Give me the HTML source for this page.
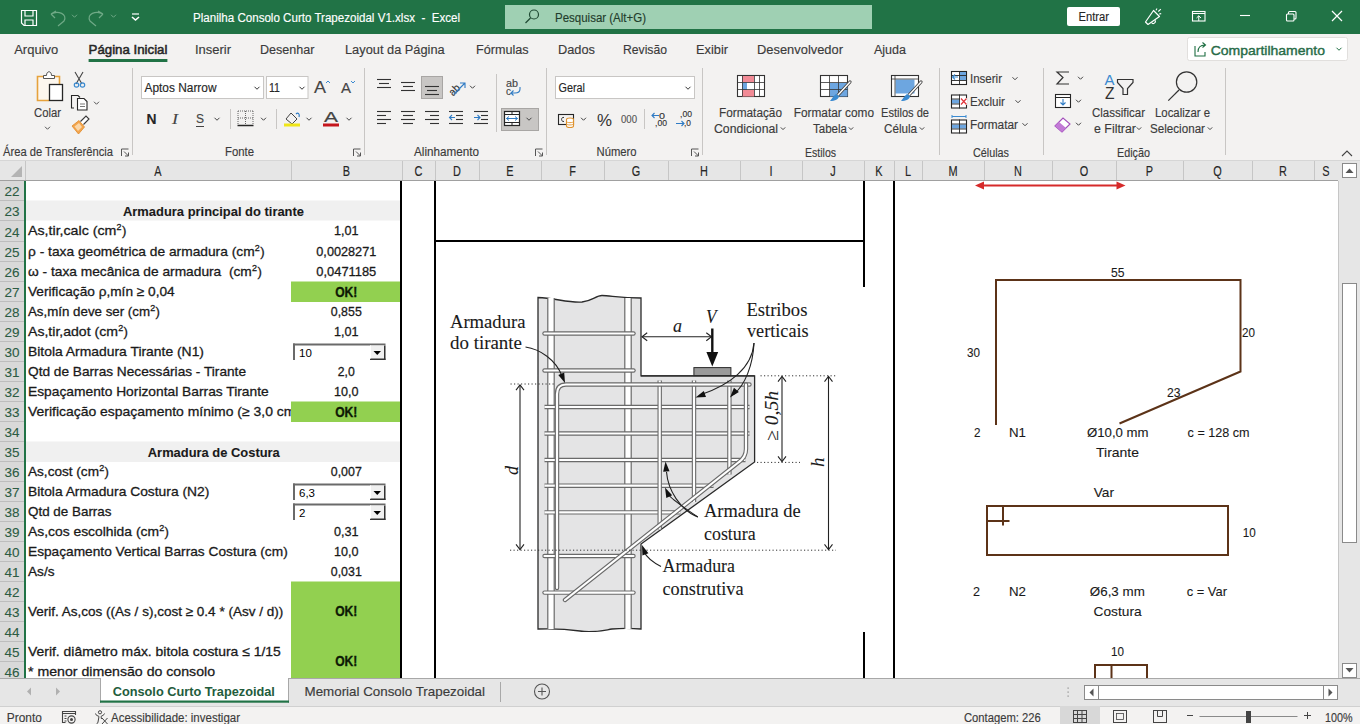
<!DOCTYPE html>
<html><head><meta charset="utf-8"><title>Excel</title>
<style>
html,body{margin:0;padding:0;background:#fff;overflow:hidden;}
svg{display:block;font-family:"Liberation Sans", sans-serif;}
text{stroke:currentColor;}
</style></head><body>
<svg width="1360" height="724" viewBox="0 0 1360 724">
<rect x="0" y="0" width="1360" height="34" fill="#217346"/>
<path d="M21.5,10.5 H36.5 V25.5 H24 L21.5,23 Z" fill="none" stroke="#fff" stroke-width="1.2"/>
<path d="M25,10.5 V16 H33 V10.5" fill="none" stroke="#fff" stroke-width="1.2"/>
<path d="M25,25.5 V20 H33 V25.5" fill="none" stroke="#fff" stroke-width="1.2"/>
<path d="M51,14 L55,18 M51,14 L56,11 M51,14 C58,10 68,14 64,21 L58,26" fill="none" stroke="#6fa986" stroke-width="1.2"/>
<path d="M72.0,14.75 L74.5,17.25 L77.0,14.75" fill="none" stroke="#6fa986" stroke-width="1"/>
<path d="M103,14 L99,18 M103,14 L98,11 M103,14 C96,10 86,14 90,21 L96,26" fill="none" stroke="#6fa986" stroke-width="1.2"/>
<path d="M111.0,14.75 L113.5,17.25 L116.0,14.75" fill="none" stroke="#6fa986" stroke-width="1"/>
<line x1="132" y1="14" x2="139" y2="14" stroke="#fff" stroke-width="1.2"/>
<path d="M132,17 L135.5,20 L139,17" fill="none" stroke="#fff" stroke-width="1.6"/>
<text x="193" y="22" font-size="12.5" fill="#fff" color="#fff" stroke-width="0.15" textLength="267" lengthAdjust="spacingAndGlyphs">Planilha Consolo Curto Trapezoidal V1.xlsx  -  Excel</text>
<rect x="505" y="5" width="367" height="24" fill="#9fd0b3"/>
<circle cx="534" cy="14.5" r="4.5" fill="none" stroke="#1f4a33" stroke-width="1.2"/>
<line x1="530.5" y1="18" x2="525.5" y2="23" stroke="#1f4a33" stroke-width="1.2"/>
<text x="555" y="21.5" font-size="12.5" fill="#1f3d2c" color="#1f3d2c" stroke-width="0.15" textLength="91" lengthAdjust="spacingAndGlyphs">Pesquisar (Alt+G)</text>
<rect x="1067" y="7" width="53" height="19" fill="#fff" rx="2"/>
<text x="1078.5" y="21" font-size="12.5" fill="#262626" color="#262626" stroke-width="0.15" textLength="30.5" lengthAdjust="spacingAndGlyphs">Entrar</text>
<path d="M1145.5,22 L1148,24.5 L1159.5,16.5 L1153.5,10.5 Z" fill="none" stroke="#fff" stroke-width="1.2" stroke-linejoin="round"/>
<path d="M1151.5,22.5 a2,2 0 0 0 3.5,-2.2" fill="none" stroke="#fff" stroke-width="1.1"/>
<path d="M1156,10.2 L1157,8.5 M1158.3,11.5 L1160.8,9.2 M1159.2,14 L1161.2,13.6" fill="none" stroke="#fff" stroke-width="1.1"/>
<rect x="1192.5" y="11.5" width="12.5" height="9.5" fill="none" stroke="#fff" stroke-width="1.1"/>
<line x1="1192.5" y1="13.5" x2="1205" y2="13.5" stroke="#fff" stroke-width="1"/>
<path d="M1198.75,21 V15.8 M1196.5,18 L1198.75,15.8 L1201,18" fill="none" stroke="#fff" stroke-width="1"/>
<line x1="1240" y1="15.5" x2="1250" y2="15.5" stroke="#fff" stroke-width="1.1"/>
<rect x="1286.5" y="14" width="7.5" height="7" fill="none" stroke="#fff" stroke-width="1.1" rx="1"/>
<path d="M1288.5,14 V12.5 a1,1 0 0 1 1,-1 H1295 a1,1 0 0 1 1,1 V18 a1,1 0 0 1 -1,1 H1294" fill="none" stroke="#fff" stroke-width="1.1"/>
<path d="M1332,11 L1342,21 M1342,11 L1332,21" fill="none" stroke="#fff" stroke-width="1.2"/>
<rect x="0" y="34" width="1360" height="126" fill="#f3f2f1"/>
<text x="14.2" y="54" font-size="12.5" fill="#3b3b3b" color="#3b3b3b" stroke-width="0.15" textLength="44" lengthAdjust="spacingAndGlyphs">Arquivo</text>
<text x="195" y="54" font-size="12.5" fill="#3b3b3b" color="#3b3b3b" stroke-width="0.15" textLength="36" lengthAdjust="spacingAndGlyphs">Inserir</text>
<text x="260" y="54" font-size="12.5" fill="#3b3b3b" color="#3b3b3b" stroke-width="0.15" textLength="54.5" lengthAdjust="spacingAndGlyphs">Desenhar</text>
<text x="345" y="54" font-size="12.5" fill="#3b3b3b" color="#3b3b3b" stroke-width="0.15" textLength="99.7" lengthAdjust="spacingAndGlyphs">Layout da Página</text>
<text x="476" y="54" font-size="12.5" fill="#3b3b3b" color="#3b3b3b" stroke-width="0.15" textLength="52.6" lengthAdjust="spacingAndGlyphs">Fórmulas</text>
<text x="558" y="54" font-size="12.5" fill="#3b3b3b" color="#3b3b3b" stroke-width="0.15" textLength="37" lengthAdjust="spacingAndGlyphs">Dados</text>
<text x="623" y="54" font-size="12.5" fill="#3b3b3b" color="#3b3b3b" stroke-width="0.15" textLength="44" lengthAdjust="spacingAndGlyphs">Revisão</text>
<text x="696" y="54" font-size="12.5" fill="#3b3b3b" color="#3b3b3b" stroke-width="0.15" textLength="32" lengthAdjust="spacingAndGlyphs">Exibir</text>
<text x="757" y="54" font-size="12.5" fill="#3b3b3b" color="#3b3b3b" stroke-width="0.15" textLength="86" lengthAdjust="spacingAndGlyphs">Desenvolvedor</text>
<text x="874" y="54" font-size="12.5" fill="#3b3b3b" color="#3b3b3b" stroke-width="0.15" textLength="32" lengthAdjust="spacingAndGlyphs">Ajuda</text>
<text x="88.6" y="54" font-size="12.5" fill="#262626" color="#262626" stroke-width="0.5" textLength="78.8" lengthAdjust="spacingAndGlyphs">Página Inicial</text>
<rect x="88.6" y="59" width="78.8" height="3" fill="#217346"/>
<rect x="1187.5" y="37.5" width="160" height="23" fill="#fff" stroke="#e1dfdd" stroke-width="1" rx="2"/>
<path d="M1195,46 V56 H1205 V52" fill="none" stroke="#1e6e42" stroke-width="1.1"/>
<path d="M1198,52 C1198,47 1201,45 1205,45 M1202.5,42.5 L1205.5,45 L1202.5,47.5" fill="none" stroke="#1e6e42" stroke-width="1.1"/>
<text x="1210.7" y="54.5" font-size="13.5" fill="#276b47" color="#276b47" stroke-width="0.4" textLength="114.3" lengthAdjust="spacingAndGlyphs">Compartilhamento</text>
<path d="M1336.5,47.75 L1339,50.25 L1341.5,47.75" fill="none" stroke="#1e6e42" stroke-width="1"/>
<line x1="132.5" y1="68" x2="132.5" y2="155" stroke="#c8c6c4" stroke-width="1"/>
<line x1="364.5" y1="68" x2="364.5" y2="155" stroke="#c8c6c4" stroke-width="1"/>
<line x1="546.5" y1="68" x2="546.5" y2="155" stroke="#c8c6c4" stroke-width="1"/>
<line x1="702.5" y1="68" x2="702.5" y2="155" stroke="#c8c6c4" stroke-width="1"/>
<line x1="939.5" y1="68" x2="939.5" y2="155" stroke="#c8c6c4" stroke-width="1"/>
<line x1="1043.5" y1="68" x2="1043.5" y2="155" stroke="#c8c6c4" stroke-width="1"/>
<line x1="1225.5" y1="68" x2="1225.5" y2="155" stroke="#c8c6c4" stroke-width="1"/>
<rect x="37.5" y="76.5" width="22" height="24" fill="#fdf7ee"/>
<path d="M45,76.5 H37.5 V100.5 H49" fill="none" stroke="#e6a23c" stroke-width="1.6"/>
<path d="M53,76.5 H59.5 V84" fill="none" stroke="#e6a23c" stroke-width="1.6"/>
<path d="M43.5,78.5 V75.5 H46.5 C46.5,70.5 51.5,70.5 51.5,75.5 H54.5 V78.5 Z" fill="#fff" stroke="#555" stroke-width="1"/>
<rect x="49.5" y="84.5" width="13" height="16" fill="#fff" stroke="#262626" stroke-width="1.3"/>
<text x="34" y="117" font-size="12.5" fill="#3b3b3b" color="#3b3b3b" stroke-width="0.15" textLength="27" lengthAdjust="spacingAndGlyphs">Colar</text>
<path d="M45.0,126.75 L47.5,129.25 L50.0,126.75" fill="none" stroke="#555" stroke-width="1"/>
<path d="M75,72 L82,84 M83,72 L76,84" fill="none" stroke="#444" stroke-width="1.1"/>
<circle cx="76.5" cy="85" r="2.2" fill="none" stroke="#3a8ad0" stroke-width="1.2"/>
<circle cx="82.5" cy="85" r="2.2" fill="none" stroke="#3a8ad0" stroke-width="1.2"/>
<path d="M74,108 H71.5 V95.5 H78 L80,97.5" fill="none" stroke="#262626" stroke-width="1.1"/>
<path d="M77.5,98.5 H84 L87,101.5 V110 H77.5 Z" fill="#fff" stroke="#262626" stroke-width="1.1"/>
<line x1="80" y1="104" x2="85" y2="104" stroke="#555" stroke-width="0.8"/>
<line x1="80" y1="106.5" x2="85" y2="106.5" stroke="#555" stroke-width="0.8"/>
<path d="M94.0,101.75 L96.5,104.25 L99.0,101.75" fill="none" stroke="#555" stroke-width="1"/>
<path d="M72,126 L79,120.5 L84.5,127 L78.5,134 Z" fill="#f3a54d" stroke="#e08a2a" stroke-width="0.8"/>
<path d="M74.5,126.5 L79,123 L82,127 L78,131 Z" fill="#fbd7a8"/>
<path d="M80.5,121.5 L86,116 L89,119 L83.5,124.5" fill="#fff" stroke="#3a3a3a" stroke-width="1.1"/>
<text x="3" y="156" font-size="12.5" fill="#3b3b3b" color="#3b3b3b" stroke-width="0.15" textLength="110" lengthAdjust="spacingAndGlyphs">Área de Transferência</text>
<path d="M121.5,156 V149 H128.5" fill="none" stroke="#555" stroke-width="1"/>
<path d="M124.0,151.5 L128.5,156 M128.5,152.5 V156 H125.0" fill="none" stroke="#555" stroke-width="1"/>
<rect x="141.5" y="76.5" width="122" height="22" fill="#fff" stroke="#c8c6c4" stroke-width="1"/>
<text x="144.5" y="92" font-size="12.5" fill="#262626" color="#262626" stroke-width="0.15" textLength="72" lengthAdjust="spacingAndGlyphs">Aptos Narrow</text>
<path d="M254.5,86.75 L257,89.25 L259.5,86.75" fill="none" stroke="#333" stroke-width="1"/>
<rect x="266.5" y="76.5" width="41.5" height="22" fill="#fff" stroke="#c8c6c4" stroke-width="1"/>
<text x="269" y="92" font-size="12.5" fill="#262626" color="#262626" stroke-width="0.15" textLength="11" lengthAdjust="spacingAndGlyphs">11</text>
<path d="M299.5,86.75 L302,89.25 L304.5,86.75" fill="none" stroke="#333" stroke-width="1"/>
<text x="314" y="93" font-size="16" fill="#444" color="#444" stroke-width="0.15" textLength="12" lengthAdjust="spacingAndGlyphs">A</text>
<path d="M326,83 L328,81 L330,83" fill="none" stroke="#3a8ad0" stroke-width="1"/>
<text x="341" y="93" font-size="14" fill="#444" color="#444" stroke-width="0.15" textLength="10" lengthAdjust="spacingAndGlyphs">A</text>
<path d="M351,81 L353,83 L355,81" fill="none" stroke="#3a8ad0" stroke-width="1"/>
<text x="146.5" y="124" font-size="14" fill="#262626" color="#262626" stroke-width="0.1" textLength="10" lengthAdjust="spacingAndGlyphs" font-weight="bold">N</text>
<text x="172" y="124" font-size="14" fill="#444" color="#444" stroke-width="0.1" font-family='"Liberation Serif", serif' textLength="6" lengthAdjust="spacingAndGlyphs" font-style="italic">I</text>
<text x="196" y="123" font-size="13" fill="#444" color="#444" stroke-width="0.15" textLength="8" lengthAdjust="spacingAndGlyphs">S</text>
<line x1="196" y1="126.5" x2="204" y2="126.5" stroke="#444" stroke-width="1"/>
<path d="M214.5,117.75 L217,120.25 L219.5,117.75" fill="none" stroke="#444" stroke-width="1"/>
<line x1="230.5" y1="109" x2="230.5" y2="129" stroke="#c8c6c4" stroke-width="1"/>
<path d="M238,111 H253 M238,111 V125 M253,111 V125 M245.5,111 V125 M238,118 H253" fill="none" stroke="#666" stroke-width="1" stroke-dasharray="1,1"/>
<line x1="237.5" y1="125.5" x2="253.5" y2="125.5" stroke="#262626" stroke-width="1.5"/>
<path d="M261.0,117.75 L263.5,120.25 L266.0,117.75" fill="none" stroke="#444" stroke-width="1"/>
<line x1="276.5" y1="109" x2="276.5" y2="129" stroke="#c8c6c4" stroke-width="1"/>
<path d="M286,119 L291,113 L297,119 L292,124 Z" fill="none" stroke="#444" stroke-width="1"/>
<path d="M296,114 C298,112 300,114 299,117" fill="none" stroke="#2f7bc4" stroke-width="1.2"/>
<rect x="284" y="123.5" width="16" height="3" fill="#f0e618"/>
<path d="M306.5,117.75 L309,120.25 L311.5,117.75" fill="none" stroke="#444" stroke-width="1"/>
<text x="324" y="122" font-size="14" fill="#444" color="#444" stroke-width="0.15" textLength="14" lengthAdjust="spacingAndGlyphs">A</text>
<rect x="323" y="123.5" width="16" height="3" fill="#c5161d"/>
<path d="M346.5,117.75 L349,120.25 L351.5,117.75" fill="none" stroke="#444" stroke-width="1"/>
<text x="225" y="156" font-size="12.5" fill="#3b3b3b" color="#3b3b3b" stroke-width="0.15" textLength="29" lengthAdjust="spacingAndGlyphs">Fonte</text>
<path d="M353.5,156 V149 H360.5" fill="none" stroke="#555" stroke-width="1"/>
<path d="M356.0,151.5 L360.5,156 M360.5,152.5 V156 H357.0" fill="none" stroke="#555" stroke-width="1"/>
<line x1="377" y1="79.5" x2="391" y2="79.5" stroke="#333" stroke-width="1.1"/>
<line x1="379" y1="83.5" x2="389" y2="83.5" stroke="#333" stroke-width="1.1"/>
<line x1="377" y1="87.5" x2="391" y2="87.5" stroke="#333" stroke-width="1.1"/>
<line x1="401" y1="82.5" x2="415" y2="82.5" stroke="#333" stroke-width="1.1"/>
<line x1="403" y1="86.5" x2="413" y2="86.5" stroke="#333" stroke-width="1.1"/>
<line x1="401" y1="90.5" x2="415" y2="90.5" stroke="#333" stroke-width="1.1"/>
<rect x="421.5" y="76.5" width="21" height="22" fill="#c8c6c4" stroke="#a8a6a4" stroke-width="1"/>
<line x1="425" y1="86.5" x2="439" y2="86.5" stroke="#333" stroke-width="1.1"/>
<line x1="427" y1="90.5" x2="437" y2="90.5" stroke="#333" stroke-width="1.1"/>
<line x1="425" y1="94.5" x2="439" y2="94.5" stroke="#333" stroke-width="1.1"/>
<text x="447" y="94" font-size="11" fill="#333" color="#333" stroke-width="0.15" textLength="11" lengthAdjust="spacingAndGlyphs" transform="rotate(-45 453 88)">ab</text>
<path d="M454,94 L465,83 M460,83 H465 V88" fill="none" stroke="#2f7bc4" stroke-width="1.1"/>
<path d="M470.0,85.75 L472.5,88.25 L475.0,85.75" fill="none" stroke="#444" stroke-width="1"/>
<line x1="496.5" y1="74" x2="496.5" y2="132" stroke="#c8c6c4" stroke-width="1"/>
<text x="506" y="87" font-size="10.5" fill="#444" color="#444" stroke-width="0.15" textLength="12" lengthAdjust="spacingAndGlyphs">ab</text>
<text x="506" y="95" font-size="10.5" fill="#444" color="#444" stroke-width="0.15" textLength="5" lengthAdjust="spacingAndGlyphs">c</text>
<path d="M520,87 V89 C520,92 518,93 515,93 L511,93 M513.5,90.5 L511,93 L513.5,95.5" fill="none" stroke="#2f7bc4" stroke-width="1.1"/>
<line x1="377" y1="111.5" x2="391" y2="111.5" stroke="#333" stroke-width="1.1"/>
<line x1="377" y1="115.5" x2="386" y2="115.5" stroke="#333" stroke-width="1.1"/>
<line x1="377" y1="119.5" x2="391" y2="119.5" stroke="#333" stroke-width="1.1"/>
<line x1="377" y1="123.5" x2="386" y2="123.5" stroke="#333" stroke-width="1.1"/>
<line x1="401" y1="111.5" x2="415" y2="111.5" stroke="#333" stroke-width="1.1"/>
<line x1="403" y1="115.5" x2="413" y2="115.5" stroke="#333" stroke-width="1.1"/>
<line x1="401" y1="119.5" x2="415" y2="119.5" stroke="#333" stroke-width="1.1"/>
<line x1="403" y1="123.5" x2="413" y2="123.5" stroke="#333" stroke-width="1.1"/>
<line x1="425" y1="111.5" x2="439" y2="111.5" stroke="#333" stroke-width="1.1"/>
<line x1="430" y1="115.5" x2="439" y2="115.5" stroke="#333" stroke-width="1.1"/>
<line x1="425" y1="119.5" x2="439" y2="119.5" stroke="#333" stroke-width="1.1"/>
<line x1="430" y1="123.5" x2="439" y2="123.5" stroke="#333" stroke-width="1.1"/>
<line x1="449" y1="111.5" x2="463" y2="111.5" stroke="#333" stroke-width="1.1"/>
<line x1="456" y1="115.5" x2="463" y2="115.5" stroke="#333" stroke-width="1.1"/>
<line x1="456" y1="119.5" x2="463" y2="119.5" stroke="#333" stroke-width="1.1"/>
<line x1="449" y1="123.5" x2="463" y2="123.5" stroke="#333" stroke-width="1.1"/>
<path d="M455,117.5 H449.5 M452,115 L449.5,117.5 L452,120" fill="none" stroke="#2f7bc4" stroke-width="1.1"/>
<line x1="474" y1="111.5" x2="488" y2="111.5" stroke="#333" stroke-width="1.1"/>
<line x1="481" y1="115.5" x2="488" y2="115.5" stroke="#333" stroke-width="1.1"/>
<line x1="481" y1="119.5" x2="488" y2="119.5" stroke="#333" stroke-width="1.1"/>
<line x1="474" y1="123.5" x2="488" y2="123.5" stroke="#333" stroke-width="1.1"/>
<path d="M474,117.5 H480 M477.5,115 L480,117.5 L477.5,120" fill="none" stroke="#2f7bc4" stroke-width="1.1"/>
<rect x="501.5" y="108.5" width="37" height="22" fill="#c8c6c4" stroke="#a8a6a4" stroke-width="1"/>
<rect x="504.5" y="111.5" width="15" height="14" fill="#fff" stroke="#262626" stroke-width="1.2"/>
<line x1="504.5" y1="114.5" x2="519.5" y2="114.5" stroke="#262626" stroke-width="1"/>
<line x1="504.5" y1="122.5" x2="519.5" y2="122.5" stroke="#262626" stroke-width="1"/>
<line x1="512" y1="111.5" x2="512" y2="114.5" stroke="#262626" stroke-width="1"/>
<line x1="512" y1="122.5" x2="512" y2="125.5" stroke="#262626" stroke-width="1"/>
<path d="M506.5,118.5 H517.5 M509,116.5 L506.5,118.5 L509,120.5 M515,116.5 L517.5,118.5 L515,120.5" fill="none" stroke="#2f7bc4" stroke-width="1"/>
<path d="M526.5,117.75 L529,120.25 L531.5,117.75" fill="none" stroke="#444" stroke-width="1"/>
<text x="414" y="156" font-size="12.5" fill="#3b3b3b" color="#3b3b3b" stroke-width="0.15" textLength="65" lengthAdjust="spacingAndGlyphs">Alinhamento</text>
<path d="M535.5,156 V149 H542.5" fill="none" stroke="#555" stroke-width="1"/>
<path d="M538.0,151.5 L542.5,156 M542.5,152.5 V156 H539.0" fill="none" stroke="#555" stroke-width="1"/>
<rect x="555.5" y="76.5" width="139" height="22" fill="#fff" stroke="#c8c6c4" stroke-width="1"/>
<text x="558.5" y="92" font-size="12.5" fill="#262626" color="#262626" stroke-width="0.15" textLength="26.5" lengthAdjust="spacingAndGlyphs">Geral</text>
<path d="M685.5,86.75 L688,89.25 L690.5,86.75" fill="none" stroke="#333" stroke-width="1"/>
<rect x="558.5" y="114.5" width="15" height="10" fill="none" stroke="#262626" stroke-width="1.1"/>
<path d="M564,117.5 C561,116.5 560.5,122 564,121.5" fill="none" stroke="#333" stroke-width="1"/>
<path d="M566.5,119.5 V126 C566.5,128 573.5,128 573.5,126 V119.5 C573.5,117.5 566.5,117.5 566.5,119.5 Z" fill="#fff" stroke="#e0932e" stroke-width="1.1"/>
<path d="M566.5,121.5 C566.5,123 573.5,123 573.5,121.5 M566.5,123.8 C566.5,125.3 573.5,125.3 573.5,123.8" fill="none" stroke="#e0932e" stroke-width="0.9"/>
<path d="M581.0,117.75 L583.5,120.25 L586.0,117.75" fill="none" stroke="#444" stroke-width="1"/>
<text x="597" y="126" font-size="17" fill="#333" color="#333" stroke-width="0" textLength="15" lengthAdjust="spacingAndGlyphs">%</text>
<text x="621" y="123" font-size="10" fill="#555" color="#555" stroke-width="0.15" textLength="16" lengthAdjust="spacingAndGlyphs">000</text>
<line x1="644.5" y1="109" x2="644.5" y2="129" stroke="#c8c6c4" stroke-width="1"/>
<text x="659" y="119" font-size="9.5" fill="#333" color="#333" stroke-width="0.15" textLength="6" lengthAdjust="spacingAndGlyphs">0</text>
<text x="655" y="126" font-size="9.5" fill="#333" color="#333" stroke-width="0.15" textLength="12" lengthAdjust="spacingAndGlyphs">,00</text>
<path d="M652,115.5 H659 M654.5,113 L652,115.5 L654.5,118" fill="none" stroke="#2f7bc4" stroke-width="1.1"/>
<text x="680" y="117" font-size="9.5" fill="#333" color="#333" stroke-width="0.15" textLength="12" lengthAdjust="spacingAndGlyphs">,00</text>
<text x="684" y="126" font-size="9.5" fill="#333" color="#333" stroke-width="0.15" textLength="7" lengthAdjust="spacingAndGlyphs">,0</text>
<path d="M676,123.5 H684 M681.5,121 L684,123.5 L681.5,126" fill="none" stroke="#2f7bc4" stroke-width="1.1"/>
<text x="596.6" y="156" font-size="12.5" fill="#3b3b3b" color="#3b3b3b" stroke-width="0.15" textLength="40" lengthAdjust="spacingAndGlyphs">Número</text>
<path d="M691.5,156 V149 H698.5" fill="none" stroke="#555" stroke-width="1"/>
<path d="M694.0,151.5 L698.5,156 M698.5,152.5 V156 H695.0" fill="none" stroke="#555" stroke-width="1"/>
<rect x="737.5" y="75.5" width="27" height="21" fill="#fff" stroke="#333" stroke-width="1.1"/>
<rect x="742" y="76" width="12" height="6.5" fill="#f28b96"/>
<rect x="742" y="90" width="12" height="6.5" fill="#f28b96"/>
<rect x="742" y="82.5" width="5" height="7.5" fill="#6da6e0"/>
<line x1="742.5" y1="75.5" x2="742.5" y2="96.5" stroke="#333" stroke-width="0.8"/>
<line x1="754.5" y1="75.5" x2="754.5" y2="96.5" stroke="#333" stroke-width="0.8"/>
<line x1="759.5" y1="75.5" x2="759.5" y2="96.5" stroke="#333" stroke-width="0.8"/>
<line x1="737.5" y1="82.5" x2="764.5" y2="82.5" stroke="#333" stroke-width="0.8"/>
<line x1="737.5" y1="89.5" x2="764.5" y2="89.5" stroke="#333" stroke-width="0.8"/>
<text x="719" y="117" font-size="12.5" fill="#3b3b3b" color="#3b3b3b" stroke-width="0.15" textLength="63" lengthAdjust="spacingAndGlyphs">Formatação</text>
<text x="714" y="133" font-size="12.5" fill="#3b3b3b" color="#3b3b3b" stroke-width="0.15" textLength="64" lengthAdjust="spacingAndGlyphs">Condicional</text>
<path d="M780.8,127.4 L783,129.6 L785.2,127.4" fill="none" stroke="#444" stroke-width="1"/>
<rect x="820.5" y="75.5" width="27" height="21" fill="#fff" stroke="#333" stroke-width="1.1"/>
<rect x="830" y="83" width="17.5" height="13.5" fill="#6da6e0"/>
<line x1="829.5" y1="75.5" x2="829.5" y2="96.5" stroke="#333" stroke-width="0.8"/>
<line x1="838.5" y1="75.5" x2="838.5" y2="96.5" stroke="#333" stroke-width="0.8"/>
<line x1="820.5" y1="82.5" x2="847.5" y2="82.5" stroke="#333" stroke-width="0.8"/>
<line x1="820.5" y1="89.5" x2="847.5" y2="89.5" stroke="#333" stroke-width="0.8"/>
<path d="M850,82 L838,95" fill="none" stroke="#444" stroke-width="3.2" stroke-linecap="round"/>
<path d="M850,82 L838,95" fill="none" stroke="#fff" stroke-width="1.4" stroke-linecap="round"/>
<path d="M836,94 C833,96 832,99 830,101 C835,101 839,99 839,96 Z" fill="#3a8ad0"/>
<text x="793.7" y="117" font-size="12.5" fill="#3b3b3b" color="#3b3b3b" stroke-width="0.15" textLength="80.3" lengthAdjust="spacingAndGlyphs">Formatar como</text>
<text x="813" y="133" font-size="12.5" fill="#3b3b3b" color="#3b3b3b" stroke-width="0.15" textLength="34" lengthAdjust="spacingAndGlyphs">Tabela</text>
<path d="M848.8,127.4 L851,129.6 L853.2,127.4" fill="none" stroke="#444" stroke-width="1"/>
<rect x="891.5" y="75.5" width="27" height="21" fill="#fff" stroke="#333" stroke-width="1.1"/>
<rect x="895.5" y="79.5" width="19" height="14" fill="#6da6e0"/>
<line x1="891.5" y1="79" x2="918.5" y2="79" stroke="#333" stroke-width="0.8"/>
<line x1="895" y1="75.5" x2="895" y2="96.5" stroke="#333" stroke-width="0.8"/>
<path d="M921,82 L909,95" fill="none" stroke="#444" stroke-width="3.2" stroke-linecap="round"/>
<path d="M921,82 L909,95" fill="none" stroke="#fff" stroke-width="1.4" stroke-linecap="round"/>
<path d="M907,94 C904,96 903,99 901,101 C906,101 910,99 910,96 Z" fill="#3a8ad0"/>
<text x="881" y="117" font-size="12.5" fill="#3b3b3b" color="#3b3b3b" stroke-width="0.15" textLength="48" lengthAdjust="spacingAndGlyphs">Estilos de</text>
<text x="884" y="133" font-size="12.5" fill="#3b3b3b" color="#3b3b3b" stroke-width="0.15" textLength="33" lengthAdjust="spacingAndGlyphs">Célula</text>
<path d="M919.8,127.4 L922,129.6 L924.2,127.4" fill="none" stroke="#444" stroke-width="1"/>
<text x="805" y="157" font-size="12.5" fill="#3b3b3b" color="#3b3b3b" stroke-width="0.15" textLength="31" lengthAdjust="spacingAndGlyphs">Estilos</text>
<rect x="951.5" y="71.5" width="15" height="13" fill="#fff" stroke="#262626" stroke-width="1.1"/>
<rect x="960" y="72" width="6" height="8" fill="#6da6e0"/>
<line x1="951" y1="75.5" x2="967" y2="75.5" stroke="#262626" stroke-width="0.9"/>
<line x1="951" y1="80.5" x2="967" y2="80.5" stroke="#262626" stroke-width="0.9"/>
<line x1="959.5" y1="71" x2="959.5" y2="85" stroke="#262626" stroke-width="0.9"/>
<path d="M958,77 H952.5 M955,74.5 L952.5,77 L955,79.5" fill="none" stroke="#3a8ad0" stroke-width="1.1"/>
<text x="970" y="83" font-size="12.5" fill="#3b3b3b" color="#3b3b3b" stroke-width="0.15" textLength="32" lengthAdjust="spacingAndGlyphs">Inserir</text>
<path d="M1012.5,77.25 L1015,79.75 L1017.5,77.25" fill="none" stroke="#444" stroke-width="1"/>
<rect x="951.5" y="95.0" width="15" height="13" fill="#fff" stroke="#262626" stroke-width="1.1"/>
<rect x="952" y="99.5" width="7" height="4" fill="#6da6e0"/>
<line x1="951" y1="99.0" x2="967" y2="99.0" stroke="#262626" stroke-width="0.9"/>
<line x1="951" y1="104.0" x2="967" y2="104.0" stroke="#262626" stroke-width="0.9"/>
<line x1="959.5" y1="94.5" x2="959.5" y2="108.5" stroke="#262626" stroke-width="0.9"/>
<rect x="960" y="98" width="7" height="7" fill="#fff"/>
<path d="M961,98.5 L966.5,104.5 M966.5,98.5 L961,104.5" fill="none" stroke="#e0343a" stroke-width="1.2"/>
<text x="970" y="106" font-size="12.5" fill="#3b3b3b" color="#3b3b3b" stroke-width="0.15" textLength="35" lengthAdjust="spacingAndGlyphs">Excluir</text>
<path d="M1015.5,100.25 L1018,102.75 L1020.5,100.25" fill="none" stroke="#444" stroke-width="1"/>
<rect x="951.5" y="120.0" width="15" height="13" fill="#fff" stroke="#262626" stroke-width="1.1"/>
<rect x="952" y="124.5" width="14" height="4" fill="#6da6e0"/>
<line x1="951" y1="124.0" x2="967" y2="124.0" stroke="#262626" stroke-width="0.9"/>
<line x1="951" y1="129.0" x2="967" y2="129.0" stroke="#262626" stroke-width="0.9"/>
<line x1="959.5" y1="119.5" x2="959.5" y2="133.5" stroke="#262626" stroke-width="0.9"/>
<path d="M952,116.5 H966 M952,115 V118 M966,115 V118" fill="none" stroke="#3a8ad0" stroke-width="1"/>
<text x="970" y="129" font-size="12.5" fill="#3b3b3b" color="#3b3b3b" stroke-width="0.15" textLength="48" lengthAdjust="spacingAndGlyphs">Formatar</text>
<path d="M1022.5,123.25 L1025,125.75 L1027.5,123.25" fill="none" stroke="#444" stroke-width="1"/>
<text x="973" y="157" font-size="12.5" fill="#3b3b3b" color="#3b3b3b" stroke-width="0.15" textLength="36" lengthAdjust="spacingAndGlyphs">Células</text>
<path d="M1069,72 H1057 L1063,77.5 L1057,84 H1069" fill="none" stroke="#333" stroke-width="1.2"/>
<path d="M1078.0,76.75 L1080.5,79.25 L1083.0,76.75" fill="none" stroke="#444" stroke-width="1"/>
<rect x="1055.5" y="94.5" width="15" height="13" fill="#fff" stroke="#262626" stroke-width="1.1"/>
<line x1="1055.5" y1="97.5" x2="1070.5" y2="97.5" stroke="#262626" stroke-width="1"/>
<path d="M1063,99 V105 M1060.5,102.5 L1063,105 L1065.5,102.5" fill="none" stroke="#2f7bc4" stroke-width="1.1"/>
<path d="M1076.0,99.75 L1078.5,102.25 L1081.0,99.75" fill="none" stroke="#444" stroke-width="1"/>
<path d="M1055,126 L1063,118 L1070,124 L1062,132 Z" fill="#fff" stroke="#a24dbb" stroke-width="1.1"/>
<path d="M1055,126 L1059,122 L1066,128 L1062,132 Z" fill="#c27ad6"/>
<path d="M1076.0,122.75 L1078.5,125.25 L1081.0,122.75" fill="none" stroke="#444" stroke-width="1"/>
<text x="1104.5" y="84.8" font-size="15.5" fill="#3a8ad0" color="#3a8ad0" stroke-width="0" textLength="10" lengthAdjust="spacingAndGlyphs">A</text>
<text x="1105" y="99" font-size="16" fill="#333" color="#333" stroke-width="0" textLength="9.5" lengthAdjust="spacingAndGlyphs">Z</text>
<path d="M1117.5,79.5 H1133 V82.5 L1127.5,88.5 V94.5 H1123 V88.5 L1117.5,82.5 Z" fill="none" stroke="#333" stroke-width="1.2"/>
<circle cx="1186.6" cy="82" r="10.2" fill="none" stroke="#333" stroke-width="1.2"/>
<line x1="1179" y1="90" x2="1168.3" y2="100.6" stroke="#333" stroke-width="1.2"/>
<text x="1092" y="117" font-size="12.5" fill="#3b3b3b" color="#3b3b3b" stroke-width="0.15" textLength="53" lengthAdjust="spacingAndGlyphs">Classificar</text>
<text x="1094" y="133" font-size="12.5" fill="#3b3b3b" color="#3b3b3b" stroke-width="0.15" textLength="42" lengthAdjust="spacingAndGlyphs">e Filtrar</text>
<path d="M1136.8,127.4 L1139,129.6 L1141.2,127.4" fill="none" stroke="#444" stroke-width="1"/>
<text x="1155" y="117" font-size="12.5" fill="#3b3b3b" color="#3b3b3b" stroke-width="0.15" textLength="55" lengthAdjust="spacingAndGlyphs">Localizar e</text>
<text x="1150" y="133" font-size="12.5" fill="#3b3b3b" color="#3b3b3b" stroke-width="0.15" textLength="55" lengthAdjust="spacingAndGlyphs">Selecionar</text>
<path d="M1207.8,127.4 L1210,129.6 L1212.2,127.4" fill="none" stroke="#444" stroke-width="1"/>
<text x="1117" y="157" font-size="12.5" fill="#3b3b3b" color="#3b3b3b" stroke-width="0.15" textLength="33" lengthAdjust="spacingAndGlyphs">Edição</text>
<path d="M1342,156 L1347,151 L1352,156" fill="none" stroke="#444" stroke-width="1.1"/>
<line x1="0" y1="160.5" x2="1360" y2="160.5" stroke="#d6d6d6" stroke-width="1"/>
<rect x="0" y="161" width="1360" height="20" fill="#e6e6e6"/>
<path d="M11,177 L22,177 L22,166 Z" fill="#b4b4b4"/>
<text x="158.0" y="176" font-size="14" fill="#262626" color="#262626" stroke-width="0.15" textLength="7.28" lengthAdjust="spacingAndGlyphs" text-anchor="middle">A</text>
<text x="346.5" y="176" font-size="14" fill="#262626" color="#262626" stroke-width="0.15" textLength="7.28" lengthAdjust="spacingAndGlyphs" text-anchor="middle">B</text>
<text x="418.5" y="176" font-size="14" fill="#262626" color="#262626" stroke-width="0.15" textLength="7.88" lengthAdjust="spacingAndGlyphs" text-anchor="middle">C</text>
<text x="457.0" y="176" font-size="14" fill="#262626" color="#262626" stroke-width="0.15" textLength="7.88" lengthAdjust="spacingAndGlyphs" text-anchor="middle">D</text>
<text x="510.0" y="176" font-size="14" fill="#262626" color="#262626" stroke-width="0.15" textLength="7.28" lengthAdjust="spacingAndGlyphs" text-anchor="middle">E</text>
<text x="572.5" y="176" font-size="14" fill="#262626" color="#262626" stroke-width="0.15" textLength="6.67" lengthAdjust="spacingAndGlyphs" text-anchor="middle">F</text>
<text x="636.0" y="176" font-size="14" fill="#262626" color="#262626" stroke-width="0.15" textLength="8.5" lengthAdjust="spacingAndGlyphs" text-anchor="middle">G</text>
<text x="704.0" y="176" font-size="14" fill="#262626" color="#262626" stroke-width="0.15" textLength="7.88" lengthAdjust="spacingAndGlyphs" text-anchor="middle">H</text>
<text x="771.0" y="176" font-size="14" fill="#262626" color="#262626" stroke-width="0.15" textLength="3.04" lengthAdjust="spacingAndGlyphs" text-anchor="middle">I</text>
<text x="833.0" y="176" font-size="14" fill="#262626" color="#262626" stroke-width="0.15" textLength="5.46" lengthAdjust="spacingAndGlyphs" text-anchor="middle">J</text>
<text x="879.0" y="176" font-size="14" fill="#262626" color="#262626" stroke-width="0.15" textLength="7.28" lengthAdjust="spacingAndGlyphs" text-anchor="middle">K</text>
<text x="908.0" y="176" font-size="14" fill="#262626" color="#262626" stroke-width="0.15" textLength="6.07" lengthAdjust="spacingAndGlyphs" text-anchor="middle">L</text>
<text x="953.0" y="176" font-size="14" fill="#262626" color="#262626" stroke-width="0.15" textLength="9.1" lengthAdjust="spacingAndGlyphs" text-anchor="middle">M</text>
<text x="1018.0" y="176" font-size="14" fill="#262626" color="#262626" stroke-width="0.15" textLength="7.88" lengthAdjust="spacingAndGlyphs" text-anchor="middle">N</text>
<text x="1084.0" y="176" font-size="14" fill="#262626" color="#262626" stroke-width="0.15" textLength="8.5" lengthAdjust="spacingAndGlyphs" text-anchor="middle">O</text>
<text x="1149.5" y="176" font-size="14" fill="#262626" color="#262626" stroke-width="0.15" textLength="7.28" lengthAdjust="spacingAndGlyphs" text-anchor="middle">P</text>
<text x="1217.5" y="176" font-size="14" fill="#262626" color="#262626" stroke-width="0.15" textLength="8.5" lengthAdjust="spacingAndGlyphs" text-anchor="middle">Q</text>
<text x="1283.0" y="176" font-size="14" fill="#262626" color="#262626" stroke-width="0.15" textLength="7.88" lengthAdjust="spacingAndGlyphs" text-anchor="middle">R</text>
<text x="1326.0" y="176" font-size="14" fill="#262626" color="#262626" stroke-width="0.15" textLength="7.28" lengthAdjust="spacingAndGlyphs" text-anchor="middle">S</text>
<line x1="25.5" y1="161" x2="25.5" y2="180" stroke="#c6c6c6" stroke-width="1"/>
<line x1="291.5" y1="161" x2="291.5" y2="180" stroke="#c6c6c6" stroke-width="1"/>
<line x1="402.5" y1="161" x2="402.5" y2="180" stroke="#c6c6c6" stroke-width="1"/>
<line x1="435.5" y1="161" x2="435.5" y2="180" stroke="#c6c6c6" stroke-width="1"/>
<line x1="479.5" y1="161" x2="479.5" y2="180" stroke="#c6c6c6" stroke-width="1"/>
<line x1="541.5" y1="161" x2="541.5" y2="180" stroke="#c6c6c6" stroke-width="1"/>
<line x1="604.5" y1="161" x2="604.5" y2="180" stroke="#c6c6c6" stroke-width="1"/>
<line x1="668.5" y1="161" x2="668.5" y2="180" stroke="#c6c6c6" stroke-width="1"/>
<line x1="740.5" y1="161" x2="740.5" y2="180" stroke="#c6c6c6" stroke-width="1"/>
<line x1="802.5" y1="161" x2="802.5" y2="180" stroke="#c6c6c6" stroke-width="1"/>
<line x1="864.5" y1="161" x2="864.5" y2="180" stroke="#c6c6c6" stroke-width="1"/>
<line x1="894.5" y1="161" x2="894.5" y2="180" stroke="#c6c6c6" stroke-width="1"/>
<line x1="922.5" y1="161" x2="922.5" y2="180" stroke="#c6c6c6" stroke-width="1"/>
<line x1="984.5" y1="161" x2="984.5" y2="180" stroke="#c6c6c6" stroke-width="1"/>
<line x1="1052.5" y1="161" x2="1052.5" y2="180" stroke="#c6c6c6" stroke-width="1"/>
<line x1="1116.5" y1="161" x2="1116.5" y2="180" stroke="#c6c6c6" stroke-width="1"/>
<line x1="1183.5" y1="161" x2="1183.5" y2="180" stroke="#c6c6c6" stroke-width="1"/>
<line x1="1252.5" y1="161" x2="1252.5" y2="180" stroke="#c6c6c6" stroke-width="1"/>
<line x1="1314.5" y1="161" x2="1314.5" y2="180" stroke="#c6c6c6" stroke-width="1"/>
<line x1="0" y1="180.5" x2="1338" y2="180.5" stroke="#a0a0a0" stroke-width="1"/>
<rect x="26" y="181" width="1312" height="497" fill="#fff"/>
<rect x="0" y="181" width="24" height="497" fill="#d9d9d9"/>
<line x1="0" y1="200.5" x2="24" y2="200.5" stroke="#bdbdbd" stroke-width="1"/>
<text x="19.5" y="195.5" font-size="13.5" fill="#2c5c43" color="#2c5c43" stroke-width="0.1" text-anchor="end">22</text>
<line x1="0" y1="220.5" x2="24" y2="220.5" stroke="#bdbdbd" stroke-width="1"/>
<text x="19.5" y="215.5" font-size="13.5" fill="#2c5c43" color="#2c5c43" stroke-width="0.1" text-anchor="end">23</text>
<line x1="0" y1="241.5" x2="24" y2="241.5" stroke="#bdbdbd" stroke-width="1"/>
<text x="19.5" y="236.5" font-size="13.5" fill="#2c5c43" color="#2c5c43" stroke-width="0.1" text-anchor="end">24</text>
<line x1="0" y1="261.5" x2="24" y2="261.5" stroke="#bdbdbd" stroke-width="1"/>
<text x="19.5" y="256.5" font-size="13.5" fill="#2c5c43" color="#2c5c43" stroke-width="0.1" text-anchor="end">25</text>
<line x1="0" y1="281.5" x2="24" y2="281.5" stroke="#bdbdbd" stroke-width="1"/>
<text x="19.5" y="276.5" font-size="13.5" fill="#2c5c43" color="#2c5c43" stroke-width="0.1" text-anchor="end">26</text>
<line x1="0" y1="301.5" x2="24" y2="301.5" stroke="#bdbdbd" stroke-width="1"/>
<text x="19.5" y="296.5" font-size="13.5" fill="#2c5c43" color="#2c5c43" stroke-width="0.1" text-anchor="end">27</text>
<line x1="0" y1="321.5" x2="24" y2="321.5" stroke="#bdbdbd" stroke-width="1"/>
<text x="19.5" y="316.5" font-size="13.5" fill="#2c5c43" color="#2c5c43" stroke-width="0.1" text-anchor="end">28</text>
<line x1="0" y1="341.5" x2="24" y2="341.5" stroke="#bdbdbd" stroke-width="1"/>
<text x="19.5" y="336.5" font-size="13.5" fill="#2c5c43" color="#2c5c43" stroke-width="0.1" text-anchor="end">29</text>
<line x1="0" y1="361.5" x2="24" y2="361.5" stroke="#bdbdbd" stroke-width="1"/>
<text x="19.5" y="356.5" font-size="13.5" fill="#2c5c43" color="#2c5c43" stroke-width="0.1" text-anchor="end">30</text>
<line x1="0" y1="381.5" x2="24" y2="381.5" stroke="#bdbdbd" stroke-width="1"/>
<text x="19.5" y="376.5" font-size="13.5" fill="#2c5c43" color="#2c5c43" stroke-width="0.1" text-anchor="end">31</text>
<line x1="0" y1="401.5" x2="24" y2="401.5" stroke="#bdbdbd" stroke-width="1"/>
<text x="19.5" y="396.5" font-size="13.5" fill="#2c5c43" color="#2c5c43" stroke-width="0.1" text-anchor="end">32</text>
<line x1="0" y1="421.5" x2="24" y2="421.5" stroke="#bdbdbd" stroke-width="1"/>
<text x="19.5" y="416.5" font-size="13.5" fill="#2c5c43" color="#2c5c43" stroke-width="0.1" text-anchor="end">33</text>
<line x1="0" y1="441.5" x2="24" y2="441.5" stroke="#bdbdbd" stroke-width="1"/>
<text x="19.5" y="436.5" font-size="13.5" fill="#2c5c43" color="#2c5c43" stroke-width="0.1" text-anchor="end">34</text>
<line x1="0" y1="461.5" x2="24" y2="461.5" stroke="#bdbdbd" stroke-width="1"/>
<text x="19.5" y="456.5" font-size="13.5" fill="#2c5c43" color="#2c5c43" stroke-width="0.1" text-anchor="end">35</text>
<line x1="0" y1="481.5" x2="24" y2="481.5" stroke="#bdbdbd" stroke-width="1"/>
<text x="19.5" y="476.5" font-size="13.5" fill="#2c5c43" color="#2c5c43" stroke-width="0.1" text-anchor="end">36</text>
<line x1="0" y1="501.5" x2="24" y2="501.5" stroke="#bdbdbd" stroke-width="1"/>
<text x="19.5" y="496.5" font-size="13.5" fill="#2c5c43" color="#2c5c43" stroke-width="0.1" text-anchor="end">37</text>
<line x1="0" y1="521.5" x2="24" y2="521.5" stroke="#bdbdbd" stroke-width="1"/>
<text x="19.5" y="516.5" font-size="13.5" fill="#2c5c43" color="#2c5c43" stroke-width="0.1" text-anchor="end">38</text>
<line x1="0" y1="541.5" x2="24" y2="541.5" stroke="#bdbdbd" stroke-width="1"/>
<text x="19.5" y="536.5" font-size="13.5" fill="#2c5c43" color="#2c5c43" stroke-width="0.1" text-anchor="end">39</text>
<line x1="0" y1="561.5" x2="24" y2="561.5" stroke="#bdbdbd" stroke-width="1"/>
<text x="19.5" y="556.5" font-size="13.5" fill="#2c5c43" color="#2c5c43" stroke-width="0.1" text-anchor="end">40</text>
<line x1="0" y1="581.5" x2="24" y2="581.5" stroke="#bdbdbd" stroke-width="1"/>
<text x="19.5" y="576.5" font-size="13.5" fill="#2c5c43" color="#2c5c43" stroke-width="0.1" text-anchor="end">41</text>
<line x1="0" y1="601.5" x2="24" y2="601.5" stroke="#bdbdbd" stroke-width="1"/>
<text x="19.5" y="596.5" font-size="13.5" fill="#2c5c43" color="#2c5c43" stroke-width="0.1" text-anchor="end">42</text>
<line x1="0" y1="621.5" x2="24" y2="621.5" stroke="#bdbdbd" stroke-width="1"/>
<text x="19.5" y="616.5" font-size="13.5" fill="#2c5c43" color="#2c5c43" stroke-width="0.1" text-anchor="end">43</text>
<line x1="0" y1="641.5" x2="24" y2="641.5" stroke="#bdbdbd" stroke-width="1"/>
<text x="19.5" y="636.5" font-size="13.5" fill="#2c5c43" color="#2c5c43" stroke-width="0.1" text-anchor="end">44</text>
<line x1="0" y1="661.5" x2="24" y2="661.5" stroke="#bdbdbd" stroke-width="1"/>
<text x="19.5" y="656.5" font-size="13.5" fill="#2c5c43" color="#2c5c43" stroke-width="0.1" text-anchor="end">45</text>
<line x1="0" y1="681.5" x2="24" y2="681.5" stroke="#bdbdbd" stroke-width="1"/>
<text x="19.5" y="676.5" font-size="13.5" fill="#2c5c43" color="#2c5c43" stroke-width="0.1" text-anchor="end">46</text>
<rect x="24" y="181" width="2" height="497" fill="#217346"/>
<rect x="1338" y="161" width="22" height="517" fill="#e6e6e6"/>
<line x1="1338.5" y1="181" x2="1338.5" y2="678" stroke="#c6c6c6" stroke-width="1"/>
<rect x="1342.5" y="163.5" width="14" height="14" fill="#fff" stroke="#8a8a8a" stroke-width="1"/>
<path d="M1345.5,173 L1349.5,168.5 L1353.5,173 Z" fill="#555"/>
<rect x="1342.5" y="283.5" width="14" height="259" fill="#fff" stroke="#8a8a8a" stroke-width="1"/>
<rect x="1342.5" y="663.5" width="14" height="14" fill="#fff" stroke="#8a8a8a" stroke-width="1"/>
<path d="M1345.5,668 L1349.5,672.5 L1353.5,668 Z" fill="#555"/>
<rect x="26" y="200.5" width="374" height="20" fill="#f0f0f0"/>
<rect x="26" y="441.5" width="374" height="20.5" fill="#f0f0f0"/>
<rect x="291" y="281.5" width="109" height="20.5" fill="#92d050"/>
<rect x="291" y="401.5" width="109" height="20.5" fill="#92d050"/>
<rect x="291" y="581.5" width="109" height="96.5" fill="#92d050"/>
<defs><clipPath id="clipA"><rect x="26" y="181" width="265" height="497"/></clipPath><clipPath id="clipG"><rect x="26" y="181" width="1312" height="497"/></clipPath></defs>
<g clip-path="url(#clipG)">
<text x="28" y="235.2" font-size="13.5" fill="#1a1a1a" color="#1a1a1a" stroke-width="0.3" textLength="88.4" lengthAdjust="spacingAndGlyphs">As,tir,calc (cm</text>
<text x="116.60000000000001" y="230.0" font-size="9" fill="#1a1a1a" color="#1a1a1a" stroke-width="0.3" textLength="5" lengthAdjust="spacingAndGlyphs">2</text>
<text x="122.0" y="235.2" font-size="13.5" fill="#1a1a1a" color="#1a1a1a" stroke-width="0.3" textLength="4.4" lengthAdjust="spacingAndGlyphs">)</text>
<text x="28" y="255.8" font-size="13.5" fill="#1a1a1a" color="#1a1a1a" stroke-width="0.3" textLength="226.60000000000002" lengthAdjust="spacingAndGlyphs">ρ - taxa geométrica de armadura (cm</text>
<text x="254.8" y="250.60000000000002" font-size="9" fill="#1a1a1a" color="#1a1a1a" stroke-width="0.3" textLength="5" lengthAdjust="spacingAndGlyphs">2</text>
<text x="260.20000000000005" y="255.8" font-size="13.5" fill="#1a1a1a" color="#1a1a1a" stroke-width="0.3" textLength="4.4" lengthAdjust="spacingAndGlyphs">)</text>
<text x="28" y="275.8" font-size="13.5" fill="#1a1a1a" color="#1a1a1a" stroke-width="0.3" textLength="223.8" lengthAdjust="spacingAndGlyphs">ω - taxa mecânica de armadura  (cm</text>
<text x="252.0" y="270.6" font-size="9" fill="#1a1a1a" color="#1a1a1a" stroke-width="0.3" textLength="5" lengthAdjust="spacingAndGlyphs">2</text>
<text x="257.40000000000003" y="275.8" font-size="13.5" fill="#1a1a1a" color="#1a1a1a" stroke-width="0.3" textLength="4.4" lengthAdjust="spacingAndGlyphs">)</text>
<text x="28" y="295.8" font-size="13.5" fill="#1a1a1a" color="#1a1a1a" stroke-width="0.3" textLength="146.7" lengthAdjust="spacingAndGlyphs">Verificação ρ,mín ≥ 0,04</text>
<text x="28" y="315.8" font-size="13.5" fill="#1a1a1a" color="#1a1a1a" stroke-width="0.3" textLength="122" lengthAdjust="spacingAndGlyphs">As,mín deve ser (cm</text>
<text x="150.2" y="310.6" font-size="9" fill="#1a1a1a" color="#1a1a1a" stroke-width="0.3" textLength="5" lengthAdjust="spacingAndGlyphs">2</text>
<text x="155.6" y="315.8" font-size="13.5" fill="#1a1a1a" color="#1a1a1a" stroke-width="0.3" textLength="4.4" lengthAdjust="spacingAndGlyphs">)</text>
<text x="28" y="335.8" font-size="13.5" fill="#1a1a1a" color="#1a1a1a" stroke-width="0.3" textLength="90" lengthAdjust="spacingAndGlyphs">As,tir,adot (cm</text>
<text x="118.2" y="330.6" font-size="9" fill="#1a1a1a" color="#1a1a1a" stroke-width="0.3" textLength="5" lengthAdjust="spacingAndGlyphs">2</text>
<text x="123.6" y="335.8" font-size="13.5" fill="#1a1a1a" color="#1a1a1a" stroke-width="0.3" textLength="4.4" lengthAdjust="spacingAndGlyphs">)</text>
<text x="28" y="355.8" font-size="13.5" fill="#1a1a1a" color="#1a1a1a" stroke-width="0.3" textLength="176" lengthAdjust="spacingAndGlyphs">Bitola Armadura Tirante (N1)</text>
<text x="28" y="375.8" font-size="13.5" fill="#1a1a1a" color="#1a1a1a" stroke-width="0.3" textLength="218" lengthAdjust="spacingAndGlyphs">Qtd de Barras Necessárias - Tirante</text>
<text x="28" y="395.8" font-size="13.5" fill="#1a1a1a" color="#1a1a1a" stroke-width="0.3" textLength="240.7" lengthAdjust="spacingAndGlyphs">Espaçamento Horizontal Barras Tirante</text>
<text x="28" y="475.8" font-size="13.5" fill="#1a1a1a" color="#1a1a1a" stroke-width="0.3" textLength="71" lengthAdjust="spacingAndGlyphs">As,cost (cm</text>
<text x="99.2" y="470.6" font-size="9" fill="#1a1a1a" color="#1a1a1a" stroke-width="0.3" textLength="5" lengthAdjust="spacingAndGlyphs">2</text>
<text x="104.6" y="475.8" font-size="13.5" fill="#1a1a1a" color="#1a1a1a" stroke-width="0.3" textLength="4.4" lengthAdjust="spacingAndGlyphs">)</text>
<text x="28" y="495.8" font-size="13.5" fill="#1a1a1a" color="#1a1a1a" stroke-width="0.3" textLength="181.3" lengthAdjust="spacingAndGlyphs">Bitola Armadura Costura (N2)</text>
<text x="28" y="515.8" font-size="13.5" fill="#1a1a1a" color="#1a1a1a" stroke-width="0.3" textLength="83.5" lengthAdjust="spacingAndGlyphs">Qtd de Barras</text>
<text x="28" y="535.8" font-size="13.5" fill="#1a1a1a" color="#1a1a1a" stroke-width="0.3" textLength="131" lengthAdjust="spacingAndGlyphs">As,cos escolhida (cm</text>
<text x="159.2" y="530.5999999999999" font-size="9" fill="#1a1a1a" color="#1a1a1a" stroke-width="0.3" textLength="5" lengthAdjust="spacingAndGlyphs">2</text>
<text x="164.6" y="535.8" font-size="13.5" fill="#1a1a1a" color="#1a1a1a" stroke-width="0.3" textLength="4.4" lengthAdjust="spacingAndGlyphs">)</text>
<text x="28" y="555.8" font-size="13.5" fill="#1a1a1a" color="#1a1a1a" stroke-width="0.3" textLength="259.7" lengthAdjust="spacingAndGlyphs">Espaçamento Vertical Barras Costura (cm)</text>
<text x="28" y="575.8" font-size="13.5" fill="#1a1a1a" color="#1a1a1a" stroke-width="0.3" textLength="26.5" lengthAdjust="spacingAndGlyphs">As/s</text>
<text x="28" y="615.8" font-size="13.5" fill="#1a1a1a" color="#1a1a1a" stroke-width="0.3" textLength="255.2" lengthAdjust="spacingAndGlyphs">Verif. As,cos ((As / s),cost ≥ 0.4 * (Asv / d))</text>
<text x="28" y="655.8" font-size="13.5" fill="#1a1a1a" color="#1a1a1a" stroke-width="0.3" textLength="252.8" lengthAdjust="spacingAndGlyphs">Verif. diâmetro máx. bitola costura ≤ 1/15</text>
<text x="28" y="675.8" font-size="13.5" fill="#1a1a1a" color="#1a1a1a" stroke-width="0.3" textLength="187" lengthAdjust="spacingAndGlyphs">* menor dimensão do consolo</text>
<g clip-path="url(#clipA)">
<text x="28" y="415.8" font-size="13.5" fill="#1a1a1a" color="#1a1a1a" stroke-width="0.3" textLength="272" lengthAdjust="spacingAndGlyphs">Verificação espaçamento mínimo (≥ 3,0 cm)</text>
</g>
<text x="213.5" y="215.8" font-size="13.5" fill="#1a1a1a" color="#1a1a1a" stroke-width="0.1" textLength="181" lengthAdjust="spacingAndGlyphs" font-weight="bold" text-anchor="middle">Armadura principal do tirante</text>
<text x="213.8" y="456.8" font-size="13.5" fill="#1a1a1a" color="#1a1a1a" stroke-width="0.1" textLength="132" lengthAdjust="spacingAndGlyphs" font-weight="bold" text-anchor="middle">Armadura de Costura</text>
<text x="346.3" y="235.2" font-size="13.5" fill="#1a1a1a" color="#1a1a1a" stroke-width="0.3" textLength="24.5" lengthAdjust="spacingAndGlyphs" text-anchor="middle">1,01</text>
<text x="346.3" y="255.8" font-size="13.5" fill="#1a1a1a" color="#1a1a1a" stroke-width="0.3" textLength="60" lengthAdjust="spacingAndGlyphs" text-anchor="middle">0,0028271</text>
<text x="346.3" y="275.8" font-size="13.5" fill="#1a1a1a" color="#1a1a1a" stroke-width="0.3" textLength="60" lengthAdjust="spacingAndGlyphs" text-anchor="middle">0,0471185</text>
<text x="346.3" y="315.8" font-size="13.5" fill="#1a1a1a" color="#1a1a1a" stroke-width="0.3" textLength="31" lengthAdjust="spacingAndGlyphs" text-anchor="middle">0,855</text>
<text x="346.3" y="335.8" font-size="13.5" fill="#1a1a1a" color="#1a1a1a" stroke-width="0.3" textLength="24.5" lengthAdjust="spacingAndGlyphs" text-anchor="middle">1,01</text>
<text x="346.3" y="375.8" font-size="13.5" fill="#1a1a1a" color="#1a1a1a" stroke-width="0.3" textLength="17" lengthAdjust="spacingAndGlyphs" text-anchor="middle">2,0</text>
<text x="346.3" y="395.8" font-size="13.5" fill="#1a1a1a" color="#1a1a1a" stroke-width="0.3" textLength="24.5" lengthAdjust="spacingAndGlyphs" text-anchor="middle">10,0</text>
<text x="346.3" y="475.8" font-size="13.5" fill="#1a1a1a" color="#1a1a1a" stroke-width="0.3" textLength="31" lengthAdjust="spacingAndGlyphs" text-anchor="middle">0,007</text>
<text x="346.3" y="535.8" font-size="13.5" fill="#1a1a1a" color="#1a1a1a" stroke-width="0.3" textLength="24.5" lengthAdjust="spacingAndGlyphs" text-anchor="middle">0,31</text>
<text x="346.3" y="555.8" font-size="13.5" fill="#1a1a1a" color="#1a1a1a" stroke-width="0.3" textLength="24.5" lengthAdjust="spacingAndGlyphs" text-anchor="middle">10,0</text>
<text x="346.3" y="575.8" font-size="13.5" fill="#1a1a1a" color="#1a1a1a" stroke-width="0.3" textLength="31" lengthAdjust="spacingAndGlyphs" text-anchor="middle">0,031</text>
<text x="346.3" y="296.8" font-size="14.2" fill="#0d1a05" color="#0d1a05" stroke-width="0.35" textLength="22.2" lengthAdjust="spacingAndGlyphs" font-weight="bold" text-anchor="middle">OK!</text>
<text x="346.3" y="416.8" font-size="14.2" fill="#0d1a05" color="#0d1a05" stroke-width="0.35" textLength="22.2" lengthAdjust="spacingAndGlyphs" font-weight="bold" text-anchor="middle">OK!</text>
<text x="346.3" y="616" font-size="14.2" fill="#0d1a05" color="#0d1a05" stroke-width="0.35" textLength="22.2" lengthAdjust="spacingAndGlyphs" font-weight="bold" text-anchor="middle">OK!</text>
<text x="346.3" y="666" font-size="14.2" fill="#0d1a05" color="#0d1a05" stroke-width="0.35" textLength="22.2" lengthAdjust="spacingAndGlyphs" font-weight="bold" text-anchor="middle">OK!</text>
</g>
<rect x="293" y="343.5" width="92.5" height="16.5" fill="#fff"/>
<rect x="293" y="343.5" width="92.5" height="2" fill="#6a6a6a"/>
<rect x="293" y="343.5" width="2" height="16.5" fill="#6a6a6a"/>
<rect x="370" y="345.5" width="15.5" height="14.5" fill="#f0f0f0"/>
<rect x="384" y="345.5" width="1.5" height="14.5" fill="#333"/>
<rect x="370" y="358.5" width="15.5" height="1.5" fill="#333"/>
<rect x="370" y="345.5" width="1" height="13" fill="#fff"/>
<path d="M373.5,351.0 L381,351.0 L377.25,355.0 Z" fill="#000"/>
<text x="299" y="357.0" font-size="11.5" fill="#000" color="#000" stroke-width="0">10</text>
<rect x="293" y="483.5" width="92.5" height="16.5" fill="#fff"/>
<rect x="293" y="483.5" width="92.5" height="2" fill="#6a6a6a"/>
<rect x="293" y="483.5" width="2" height="16.5" fill="#6a6a6a"/>
<rect x="370" y="485.5" width="15.5" height="14.5" fill="#f0f0f0"/>
<rect x="384" y="485.5" width="1.5" height="14.5" fill="#333"/>
<rect x="370" y="498.5" width="15.5" height="1.5" fill="#333"/>
<rect x="370" y="485.5" width="1" height="13" fill="#fff"/>
<path d="M373.5,491.0 L381,491.0 L377.25,495.0 Z" fill="#000"/>
<text x="299" y="497.0" font-size="11.5" fill="#000" color="#000" stroke-width="0">6,3</text>
<rect x="293" y="503.5" width="92.5" height="16.5" fill="#fff"/>
<rect x="293" y="503.5" width="92.5" height="2" fill="#6a6a6a"/>
<rect x="293" y="503.5" width="2" height="16.5" fill="#6a6a6a"/>
<rect x="370" y="505.5" width="15.5" height="14.5" fill="#f0f0f0"/>
<rect x="384" y="505.5" width="1.5" height="14.5" fill="#333"/>
<rect x="370" y="518.5" width="15.5" height="1.5" fill="#333"/>
<rect x="370" y="505.5" width="1" height="13" fill="#fff"/>
<path d="M373.5,511.0 L381,511.0 L377.25,515.0 Z" fill="#000"/>
<text x="299" y="517.0" font-size="11.5" fill="#000" color="#000" stroke-width="0">2</text>
<rect x="400" y="181" width="2" height="497" fill="#000"/>
<rect x="434" y="181" width="2" height="497" fill="#000"/>
<rect x="863" y="181" width="2" height="106" fill="#000"/>
<rect x="863" y="632" width="2" height="46" fill="#000"/>
<rect x="893" y="181" width="2" height="497" fill="#000"/>
<rect x="434" y="240" width="431" height="2" fill="#000"/>
<defs><clipPath id="figclip"><rect x="436" y="287" width="427" height="345"/></clipPath></defs>
<g clip-path="url(#figclip)">
<rect x="436" y="287" width="427" height="345" fill="#fff"/>
<path d="M538,297.5 C555,298 568,303 582,302 C592,301 596,295.5 602,295.5 C610,295.5 620,298 641,298 V375.8 H754.6 V462 L641,544 V629 C630,628 622,628 612,629 C600,631 592,633 580,631 C566,629 552,628.5 538,629 Z" fill="#e4e4e5" stroke="#2a2a2a" stroke-width="1.3"/>
<path d="M551,298 V629" fill="none" stroke="#6a6a6a" stroke-width="7.6"/>
<path d="M551,298 V629" fill="none" stroke="#fff" stroke-width="5.2"/>
<path d="M628,298 V629" fill="none" stroke="#6a6a6a" stroke-width="7.6"/>
<path d="M628,298 V629" fill="none" stroke="#fff" stroke-width="5.2"/>
<path d="M544.5,333.5 H633.5" fill="none" stroke="#6a6a6a" stroke-width="4.4" stroke-linecap="round" stroke-linejoin="round"/>
<path d="M544.5,333.5 H633.5" fill="none" stroke="#fff" stroke-width="2.2" stroke-linecap="round" stroke-linejoin="round"/>
<path d="M544.5,370.5 H633.5" fill="none" stroke="#6a6a6a" stroke-width="4.4" stroke-linecap="round" stroke-linejoin="round"/>
<path d="M544.5,370.5 H633.5" fill="none" stroke="#fff" stroke-width="2.2" stroke-linecap="round" stroke-linejoin="round"/>
<path d="M544.5,556 H633.5" fill="none" stroke="#6a6a6a" stroke-width="4.4" stroke-linecap="round" stroke-linejoin="round"/>
<path d="M544.5,556 H633.5" fill="none" stroke="#fff" stroke-width="2.2" stroke-linecap="round" stroke-linejoin="round"/>
<path d="M544.5,592.6 H633.5" fill="none" stroke="#6a6a6a" stroke-width="4.4" stroke-linecap="round" stroke-linejoin="round"/>
<path d="M544.5,592.6 H633.5" fill="none" stroke="#fff" stroke-width="2.2" stroke-linecap="round" stroke-linejoin="round"/>
<path d="M544.5,407 H749.5" fill="none" stroke="#6a6a6a" stroke-width="4.4" stroke-linecap="butt" stroke-linejoin="round"/>
<path d="M544.5,407 H749.5" fill="none" stroke="#fff" stroke-width="2.2" stroke-linecap="butt" stroke-linejoin="round"/>
<path d="M544.5,433.5 H749.5" fill="none" stroke="#6a6a6a" stroke-width="4.4" stroke-linecap="butt" stroke-linejoin="round"/>
<path d="M544.5,433.5 H749.5" fill="none" stroke="#fff" stroke-width="2.2" stroke-linecap="butt" stroke-linejoin="round"/>
<path d="M544.5,460 H745.5" fill="none" stroke="#6a6a6a" stroke-width="4.4" stroke-linecap="butt" stroke-linejoin="round"/>
<path d="M544.5,460 H745.5" fill="none" stroke="#fff" stroke-width="2.2" stroke-linecap="butt" stroke-linejoin="round"/>
<path d="M544.5,485.7 H713.5" fill="none" stroke="#6a6a6a" stroke-width="4.4" stroke-linecap="butt" stroke-linejoin="round"/>
<path d="M544.5,485.7 H713.5" fill="none" stroke="#fff" stroke-width="2.2" stroke-linecap="butt" stroke-linejoin="round"/>
<path d="M544.5,512.4 H680.5" fill="none" stroke="#6a6a6a" stroke-width="4.4" stroke-linecap="butt" stroke-linejoin="round"/>
<path d="M544.5,512.4 H680.5" fill="none" stroke="#fff" stroke-width="2.2" stroke-linecap="butt" stroke-linejoin="round"/>
<path d="M659.7,380.5 V529.5" fill="none" stroke="#6a6a6a" stroke-width="4.4" stroke-linecap="butt" stroke-linejoin="round"/>
<path d="M659.7,380.5 V529.5" fill="none" stroke="#fff" stroke-width="2.2" stroke-linecap="butt" stroke-linejoin="round"/>
<path d="M694,380.5 V502" fill="none" stroke="#6a6a6a" stroke-width="4.4" stroke-linecap="butt" stroke-linejoin="round"/>
<path d="M694,380.5 V502" fill="none" stroke="#fff" stroke-width="2.2" stroke-linecap="butt" stroke-linejoin="round"/>
<path d="M729.4,380.5 V474.5" fill="none" stroke="#6a6a6a" stroke-width="4.4" stroke-linecap="butt" stroke-linejoin="round"/>
<path d="M729.4,380.5 V474.5" fill="none" stroke="#fff" stroke-width="2.2" stroke-linecap="butt" stroke-linejoin="round"/>
<path d="M557,588 V394 Q557,384.5 566,384.5 H749.5" fill="none" stroke="#6a6a6a" stroke-width="4.4" stroke-linecap="round" stroke-linejoin="round"/>
<path d="M557,588 V394 Q557,384.5 566,384.5 H749.5" fill="none" stroke="#fff" stroke-width="2.2" stroke-linecap="round" stroke-linejoin="round"/>
<path d="M746,384.5 V449 Q746,457 739,462 L565,600" fill="none" stroke="#6a6a6a" stroke-width="4.4" stroke-linecap="round" stroke-linejoin="round"/>
<path d="M746,384.5 V449 Q746,457 739,462 L565,600" fill="none" stroke="#fff" stroke-width="2.2" stroke-linecap="round" stroke-linejoin="round"/>
<rect x="693.9" y="367.6" width="37" height="8" fill="#9a9a9a" stroke="#2a2a2a" stroke-width="1"/>
<line x1="641" y1="375.8" x2="754.6" y2="375.8" stroke="#2a2a2a" stroke-width="1.3"/>
</g>
<line x1="510.5" y1="384" x2="556" y2="384" stroke="#333" stroke-width="1" stroke-dasharray="1.2,2.3"/>
<line x1="510" y1="550.2" x2="836" y2="550.2" stroke="#333" stroke-width="1" stroke-dasharray="1.2,2.3"/>
<line x1="760.5" y1="375.8" x2="836" y2="375.8" stroke="#333" stroke-width="1" stroke-dasharray="1.2,2.3"/>
<line x1="757" y1="462.4" x2="800" y2="462.4" stroke="#333" stroke-width="1" stroke-dasharray="1.2,2.3"/>
<line x1="520" y1="385" x2="520" y2="549.5" stroke="#222" stroke-width="1.1"/>
<path d="M516,390.2 L520,385 L524,390.2" fill="none" stroke="#222" stroke-width="1.1"/>
<path d="M516,544.3 L520,549.5 L524,544.3" fill="none" stroke="#222" stroke-width="1.1"/>
<line x1="782" y1="376.5" x2="782" y2="461.5" stroke="#222" stroke-width="1.1"/>
<path d="M778,381.7 L782,376.5 L786,381.7" fill="none" stroke="#222" stroke-width="1.1"/>
<path d="M778,456.3 L782,461.5 L786,456.3" fill="none" stroke="#222" stroke-width="1.1"/>
<line x1="828.5" y1="376.5" x2="828.5" y2="549.5" stroke="#222" stroke-width="1.1"/>
<path d="M824.5,381.7 L828.5,376.5 L832.5,381.7" fill="none" stroke="#222" stroke-width="1.1"/>
<path d="M824.5,544.3 L828.5,549.5 L832.5,544.3" fill="none" stroke="#222" stroke-width="1.1"/>
<line x1="642" y1="336.7" x2="711.5" y2="336.7" stroke="#222" stroke-width="1.1"/>
<path d="M647.2,332.7 L642,336.7 L647.2,340.7" fill="none" stroke="#222" stroke-width="1.1"/>
<path d="M706.3,332.7 L711.5,336.7 L706.3,340.7" fill="none" stroke="#222" stroke-width="1.1"/>
<line x1="712.3" y1="328.5" x2="712.3" y2="354" stroke="#111" stroke-width="2.4"/>
<path d="M706.4,352 L718.2,352 L712.3,366.6 Z" fill="#111"/>
<text x="450" y="327.5" font-size="19.5" fill="#1a1a1a" color="#1a1a1a" stroke-width="0.1" font-family='"Liberation Serif", serif' textLength="75.4" lengthAdjust="spacingAndGlyphs">Armadura</text>
<text x="450" y="349" font-size="19.5" fill="#1a1a1a" color="#1a1a1a" stroke-width="0.1" font-family='"Liberation Serif", serif' textLength="72" lengthAdjust="spacingAndGlyphs">do tirante</text>
<text x="746.4" y="316.1" font-size="19.5" fill="#1a1a1a" color="#1a1a1a" stroke-width="0.1" font-family='"Liberation Serif", serif' textLength="61" lengthAdjust="spacingAndGlyphs">Estribos</text>
<text x="747" y="336.7" font-size="19.5" fill="#1a1a1a" color="#1a1a1a" stroke-width="0.1" font-family='"Liberation Serif", serif' textLength="61.6" lengthAdjust="spacingAndGlyphs">verticais</text>
<text x="704" y="517" font-size="19.5" fill="#1a1a1a" color="#1a1a1a" stroke-width="0.1" font-family='"Liberation Serif", serif' textLength="96.6" lengthAdjust="spacingAndGlyphs">Armadura de</text>
<text x="704" y="539.6" font-size="19.5" fill="#1a1a1a" color="#1a1a1a" stroke-width="0.1" font-family='"Liberation Serif", serif' textLength="51.7" lengthAdjust="spacingAndGlyphs">costura</text>
<text x="662.5" y="572.4" font-size="19.5" fill="#1a1a1a" color="#1a1a1a" stroke-width="0.1" font-family='"Liberation Serif", serif' textLength="72.5" lengthAdjust="spacingAndGlyphs">Armadura</text>
<text x="662.5" y="595" font-size="19.5" fill="#1a1a1a" color="#1a1a1a" stroke-width="0.1" font-family='"Liberation Serif", serif' textLength="81.1" lengthAdjust="spacingAndGlyphs">construtiva</text>
<text x="705.9" y="323.2" font-size="18" fill="#1a1a1a" color="#1a1a1a" stroke-width="0.1" font-family='"Liberation Serif", serif' textLength="10.5" lengthAdjust="spacingAndGlyphs" font-style="italic">V</text>
<text x="673" y="332.4" font-size="18" fill="#1a1a1a" color="#1a1a1a" stroke-width="0.1" font-family='"Liberation Serif", serif' textLength="9" lengthAdjust="spacingAndGlyphs" font-style="italic">a</text>
<text x="0" y="0" font-size="18" fill="#1a1a1a" color="#1a1a1a" stroke-width="0.1" font-family='"Liberation Serif", serif' textLength="9" lengthAdjust="spacingAndGlyphs" font-style="italic" transform="translate(518,475) rotate(-90)">d</text>
<text x="0" y="0" font-size="18" fill="#1a1a1a" color="#1a1a1a" stroke-width="0.1" font-family='"Liberation Serif", serif' textLength="9.5" lengthAdjust="spacingAndGlyphs" font-style="italic" transform="translate(823.5,467) rotate(-90)">h</text>
<text x="0" y="0" font-size="18" fill="#1a1a1a" color="#1a1a1a" stroke-width="0.1" font-family='"Liberation Serif", serif' textLength="50" lengthAdjust="spacingAndGlyphs" font-style="italic" transform="translate(778,441) rotate(-90)">≥ 0,5h</text>
<path d="M525.5,347 C540,349 556,360 562,376" fill="none" stroke="#222" stroke-width="1.1"/>
<path d="M565,383 L558.29,374.93 L564.22,372.53 Z" fill="#111"/>
<path d="M754,343 C752,368 730,385 700,395" fill="none" stroke="#222" stroke-width="1.1"/>
<path d="M695.5,397.5 L703.80,391.07 L705.99,397.09 Z" fill="#111"/>
<path d="M754,343 C753,365 745,385 734,394" fill="none" stroke="#222" stroke-width="1.1"/>
<path d="M730,397.5 L733.98,387.78 L738.88,391.90 Z" fill="#111"/>
<path d="M697.8,517 C680,510 668,490 666.5,472" fill="none" stroke="#222" stroke-width="1.1"/>
<path d="M665.5,461.5 L669.56,471.18 L663.18,471.74 Z" fill="#111"/>
<path d="M697.8,517 C685,508 672,500 668,494" fill="none" stroke="#222" stroke-width="1.1"/>
<path d="M665,487.5 L672.13,495.21 L666.33,497.92 Z" fill="#111"/>
<path d="M661,566.4 C652,562 646,556 643.5,551" fill="none" stroke="#222" stroke-width="1.1"/>
<path d="M642,545 L648.43,553.30 L642.41,555.49 Z" fill="#111"/>
<line x1="982" y1="185.5" x2="1118" y2="185.5" stroke="#d62a2a" stroke-width="2"/>
<path d="M975,185.5 L984,181.5 L984,189.5 Z" fill="#d62a2a"/>
<path d="M1125.5,185.5 L1116.5,181.5 L1116.5,189.5 Z" fill="#d62a2a"/>
<path d="M996,425 V280 H1240.5 V371.5 L1119.5,423.5" fill="none" stroke="#5c3318" stroke-width="2"/>
<text x="1117.8" y="277" font-size="13" fill="#1a1a1a" color="#1a1a1a" stroke-width="0.1" textLength="13.5" lengthAdjust="spacingAndGlyphs" text-anchor="middle">55</text>
<text x="1248.5" y="337" font-size="13" fill="#1a1a1a" color="#1a1a1a" stroke-width="0.1" textLength="13" lengthAdjust="spacingAndGlyphs" text-anchor="middle">20</text>
<text x="973.5" y="357" font-size="13" fill="#1a1a1a" color="#1a1a1a" stroke-width="0.1" textLength="13" lengthAdjust="spacingAndGlyphs" text-anchor="middle">30</text>
<text x="1173.8" y="397" font-size="13" fill="#1a1a1a" color="#1a1a1a" stroke-width="0.1" textLength="13.5" lengthAdjust="spacingAndGlyphs" text-anchor="middle">23</text>
<text x="977.3" y="437" font-size="13" fill="#1a1a1a" color="#1a1a1a" stroke-width="0.1" textLength="6.5" lengthAdjust="spacingAndGlyphs" text-anchor="middle">2</text>
<text x="1009" y="437" font-size="13" fill="#1a1a1a" color="#1a1a1a" stroke-width="0.1" textLength="17" lengthAdjust="spacingAndGlyphs">N1</text>
<text x="1087" y="437" font-size="13" fill="#1a1a1a" color="#1a1a1a" stroke-width="0.1" textLength="61.6" lengthAdjust="spacingAndGlyphs">Ø10,0 mm</text>
<text x="1187.6" y="437" font-size="13" fill="#1a1a1a" color="#1a1a1a" stroke-width="0.1" textLength="62" lengthAdjust="spacingAndGlyphs">c = 128 cm</text>
<text x="1117.5" y="457" font-size="13" fill="#1a1a1a" color="#1a1a1a" stroke-width="0.1" textLength="43" lengthAdjust="spacingAndGlyphs" text-anchor="middle">Tirante</text>
<text x="1103.9" y="497" font-size="13" fill="#1a1a1a" color="#1a1a1a" stroke-width="0.1" textLength="20.3" lengthAdjust="spacingAndGlyphs" text-anchor="middle">Var</text>
<rect x="987" y="506" width="241" height="49" fill="none" stroke="#5c3318" stroke-width="2"/>
<line x1="1003" y1="506" x2="1003" y2="525.5" stroke="#5c3318" stroke-width="2"/>
<line x1="987" y1="521" x2="1009.5" y2="521" stroke="#5c3318" stroke-width="2"/>
<text x="1249.2" y="537" font-size="13" fill="#1a1a1a" color="#1a1a1a" stroke-width="0.1" textLength="13" lengthAdjust="spacingAndGlyphs" text-anchor="middle">10</text>
<text x="976.5" y="596" font-size="13" fill="#1a1a1a" color="#1a1a1a" stroke-width="0.1" textLength="7" lengthAdjust="spacingAndGlyphs" text-anchor="middle">2</text>
<text x="1009" y="596" font-size="13" fill="#1a1a1a" color="#1a1a1a" stroke-width="0.1" textLength="17" lengthAdjust="spacingAndGlyphs">N2</text>
<text x="1089.8" y="596" font-size="13" fill="#1a1a1a" color="#1a1a1a" stroke-width="0.1" textLength="55" lengthAdjust="spacingAndGlyphs">Ø6,3 mm</text>
<text x="1186.7" y="596" font-size="13" fill="#1a1a1a" color="#1a1a1a" stroke-width="0.1" textLength="40.3" lengthAdjust="spacingAndGlyphs">c = Var</text>
<text x="1117.6" y="616" font-size="13" fill="#1a1a1a" color="#1a1a1a" stroke-width="0.1" textLength="48" lengthAdjust="spacingAndGlyphs" text-anchor="middle">Costura</text>
<text x="1117.5" y="656" font-size="13" fill="#1a1a1a" color="#1a1a1a" stroke-width="0.1" textLength="13" lengthAdjust="spacingAndGlyphs" text-anchor="middle">10</text>
<path d="M1095,678 V665 H1147 V678" fill="none" stroke="#5c3318" stroke-width="2"/>
<line x1="1111.5" y1="665" x2="1111.5" y2="678" stroke="#5c3318" stroke-width="2"/>
<rect x="0" y="678" width="1360" height="28" fill="#e6e6e6"/>
<line x1="0" y1="678.5" x2="1360" y2="678.5" stroke="#a8a8a8" stroke-width="1"/>
<path d="M31,687.5 L27,691.5 L31,695.5 Z" fill="#b0b0b0"/>
<path d="M56,687.5 L60,691.5 L56,695.5 Z" fill="#b0b0b0"/>
<rect x="100" y="678" width="189" height="23" fill="#fff"/>
<line x1="100.5" y1="678" x2="100.5" y2="703" stroke="#a8a8a8" stroke-width="1"/>
<line x1="288.5" y1="678" x2="288.5" y2="703" stroke="#a8a8a8" stroke-width="1"/>
<rect x="100" y="700.5" width="189" height="2.2" fill="#217346"/>
<line x1="0" y1="706.5" x2="1360" y2="706.5" stroke="#d0d0d0" stroke-width="1"/>
<text x="112.7" y="696" font-size="13" fill="#235c3c" color="#235c3c" stroke-width="0" textLength="162.2" lengthAdjust="spacingAndGlyphs" font-weight="bold">Consolo Curto Trapezoidal</text>
<text x="304.5" y="696" font-size="13" fill="#3b3b3b" color="#3b3b3b" stroke-width="0.15" textLength="180.5" lengthAdjust="spacingAndGlyphs">Memorial Consolo Trapezoidal</text>
<line x1="500.5" y1="682" x2="500.5" y2="702" stroke="#a8a8a8" stroke-width="1"/>
<circle cx="542" cy="691.5" r="7.5" fill="none" stroke="#555" stroke-width="1.1"/>
<path d="M538,691.5 H546 M542,687.5 V695.5" fill="none" stroke="#555" stroke-width="1.1"/>
<rect x="1067.5" y="687.5" width="1.2" height="1.2" fill="#8a8a8a"/>
<rect x="1067.5" y="691.5" width="1.2" height="1.2" fill="#8a8a8a"/>
<rect x="1067.5" y="695.5" width="1.2" height="1.2" fill="#8a8a8a"/>
<rect x="1084.5" y="685.5" width="253" height="14" fill="#fff" stroke="#8a8a8a" stroke-width="1"/>
<line x1="1098.5" y1="685.5" x2="1098.5" y2="699.5" stroke="#8a8a8a" stroke-width="1"/>
<line x1="1323.5" y1="685.5" x2="1323.5" y2="699.5" stroke="#8a8a8a" stroke-width="1"/>
<path d="M1093.5,688.5 L1089.5,692.5 L1093.5,696.5 Z" fill="#555"/>
<path d="M1328.5,688.5 L1332.5,692.5 L1328.5,696.5 Z" fill="#555"/>
<rect x="0" y="707" width="1360" height="17" fill="#f3f2f1"/>
<text x="6.8" y="722" font-size="12" fill="#3b3b3b" color="#3b3b3b" stroke-width="0.15" textLength="35" lengthAdjust="spacingAndGlyphs">Pronto</text>
<path d="M65.5,722.5 H62.5 V711.5 H75.5 V715" fill="none" stroke="#444" stroke-width="1.1"/>
<line x1="62.5" y1="713.5" x2="75.5" y2="713.5" stroke="#444" stroke-width="1"/>
<line x1="64.5" y1="716" x2="66.5" y2="716" stroke="#444" stroke-width="1"/>
<line x1="64.5" y1="718.5" x2="66.5" y2="718.5" stroke="#444" stroke-width="1"/>
<line x1="64.5" y1="721" x2="66.5" y2="721" stroke="#444" stroke-width="1"/>
<circle cx="71.5" cy="719.5" r="3.6" fill="none" stroke="#444" stroke-width="1.1"/>
<circle cx="71.5" cy="719.5" r="1.5" fill="#444"/>
<circle cx="100" cy="712.3" r="1.6" fill="none" stroke="#444" stroke-width="1"/>
<path d="M95.5,713.5 C96,716 98,715.5 99,716.5 L98,722 C97.5,724 96.5,724 96.5,724 M104.5,713.5 C104,715.5 102,715.5 101,716.5 L101.5,719" fill="none" stroke="#444" stroke-width="1"/>
<path d="M102,718 L107.5,724 M107.5,718 L102,724" fill="none" stroke="#444" stroke-width="1"/>
<text x="111" y="722" font-size="12" fill="#3b3b3b" color="#3b3b3b" stroke-width="0.15" textLength="129" lengthAdjust="spacingAndGlyphs">Acessibilidade: investigar</text>
<text x="964" y="722" font-size="12" fill="#3b3b3b" color="#3b3b3b" stroke-width="0.15" textLength="76.8" lengthAdjust="spacingAndGlyphs">Contagem: 226</text>
<rect x="1060" y="706" width="40" height="18" fill="#d8d8d8"/>
<rect x="1073.5" y="710.5" width="13" height="12" fill="none" stroke="#444" stroke-width="1"/>
<line x1="1073.5" y1="714.5" x2="1086.5" y2="714.5" stroke="#444" stroke-width="1"/>
<line x1="1073.5" y1="718.5" x2="1086.5" y2="718.5" stroke="#444" stroke-width="1"/>
<line x1="1077.5" y1="710.5" x2="1077.5" y2="722.5" stroke="#444" stroke-width="1"/>
<line x1="1082" y1="710.5" x2="1082" y2="722.5" stroke="#444" stroke-width="1"/>
<rect x="1113.5" y="710.5" width="13" height="12" fill="none" stroke="#444" stroke-width="1"/>
<rect x="1116.5" y="713.5" width="7" height="6" fill="none" stroke="#444" stroke-width="0.8"/>
<rect x="1153.5" y="710.5" width="13" height="12" fill="none" stroke="#444" stroke-width="1"/>
<path d="M1157.5,710.5 V716.5 H1162.5 V710.5" fill="none" stroke="#444" stroke-width="1"/>
<line x1="1187" y1="715.5" x2="1193" y2="715.5" stroke="#444" stroke-width="1"/>
<line x1="1199.5" y1="716.5" x2="1297.5" y2="716.5" stroke="#8a8a8a" stroke-width="1"/>
<rect x="1246" y="711" width="5" height="12" fill="#444"/>
<path d="M1304,715.5 H1311 M1307.5,712 V719" fill="none" stroke="#444" stroke-width="1"/>
<text x="1325" y="722" font-size="12" fill="#3b3b3b" color="#3b3b3b" stroke-width="0.15" textLength="27.5" lengthAdjust="spacingAndGlyphs">100%</text>
</svg>
</body></html>
